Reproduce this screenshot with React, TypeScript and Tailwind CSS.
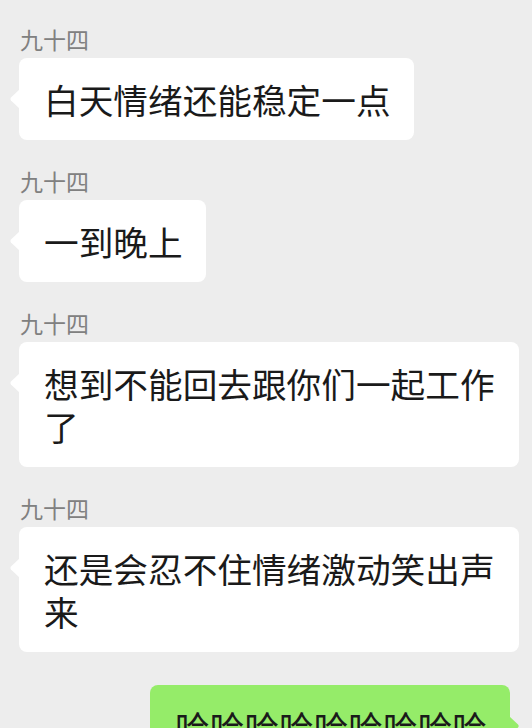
import React from 'react';

const FONT = '"Noto Sans CJK SC", "Noto Sans", sans-serif';

interface Message {
  sender: string;
  text: string;
}

const incoming: Message[] = [
  { sender: '九十四', text: '白天情绪还能稳定一点' },
  { sender: '九十四', text: '一到晚上' },
  { sender: '九十四', text: '想到不能回去跟你们一起工作了' },
  { sender: '九十四', text: '还是会忍不住情绪激动笑出声来' },
];

const LeftTail = () => (
  <svg className="absolute left-[-10px] top-[31px]" width="11" height="20" viewBox="0 0 11 20">
    <path d="M11 0 L11 20 L2 11.5 Q0.6 10 2 8.5 Z" fill="#ffffff" />
  </svg>
);

const RightTail = () => (
  <svg className="absolute right-[-10px] top-[31px]" width="11" height="20" viewBox="0 0 11 20">
    <path d="M0 0 L0 20 L9 11.5 Q10.4 10 9 8.5 Z" fill="#95ec69" />
  </svg>
);

const IncomingBubble: React.FC<Message> = ({ sender, text }) => (
  <div className="flex flex-col items-start">
    <div className="pl-[20px] text-[23px] leading-[28px] text-[#808080] mb-[5px]">{sender}</div>
    <div className="relative ml-[19px] max-w-[500px] rounded-[8px] bg-white pl-[25px] pr-[23px] pt-[20px] pb-[19px] text-[34.67px] leading-[43px] text-[#1a1a1a] break-all">
      <LeftTail />
      {text}
    </div>
  </div>
);

export default function App() {
  return (
    <div
      className="h-[728px] w-[532px] overflow-hidden bg-[#ededed] pt-[25px]"
      style={{ fontFamily: FONT }}
    >
      <div className="flex flex-col gap-[27px]">
        {incoming.map((m, i) => (
          <IncomingBubble key={i} sender={m.sender} text={m.text} />
        ))}
      </div>
      <div className="mt-[33px] flex justify-end pr-[22px]">
        <div className="relative rounded-[8px] bg-[#95ec69] pl-[25px] pr-[23px] pt-[20px] pb-[19px] text-[34.67px] leading-[43px] text-[#1a1a1a]">
          <RightTail />
          哈哈哈哈哈哈哈哈哈
        </div>
      </div>
    </div>
  );
}
